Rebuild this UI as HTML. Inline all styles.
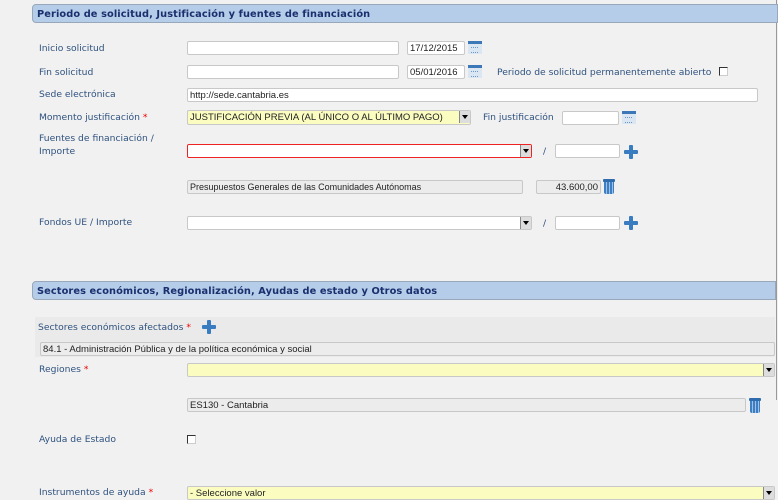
<!DOCTYPE html>
<html><head><meta charset="utf-8"><style>
body{margin:0;width:778px;height:500px;background:#f1f1f1;font-family:"DejaVu Sans","Liberation Sans",sans-serif;position:relative;overflow:hidden}
.a{position:absolute}
.h{position:absolute;left:32px;height:19px;background:#b5cde8;border:1px solid #98a8ba;border-radius:4px 0 0 4px;color:#1a2f6e;font-weight:bold;font-size:9.8px;line-height:19px;padding-left:4px;box-sizing:border-box;letter-spacing:0.1px}
.l{position:absolute;left:39px;font-size:9.2px;color:#2f527f;line-height:13px}
.i{position:absolute;height:14px;background:#fff;border:1px solid #c8c8c8;border-radius:2px;box-sizing:border-box;font-size:9.5px;color:#222;line-height:13px;padding-left:2px;font-family:"Liberation Sans",sans-serif}
.g{background:#ececec}
.y{background:#fbfdc0}
.s{color:#e00}
.arr{position:absolute;right:0;top:0;width:11px;height:12px;background:#ddd;border-left:1px solid #888;box-sizing:border-box}
.arr:after{content:"";position:absolute;left:2px;top:4px;border:3px solid transparent;border-top:4px solid #000}
.cal{position:absolute;width:14px;height:13px;background:#dbe6f3;border-top:3px solid #3c77b8;box-sizing:border-box}
.cal:after{content:"";position:absolute;left:3px;top:3px;width:7px;height:4px;border-top:1px dotted #6a96c8;border-bottom:1px dotted #6a96c8}
.plus{position:absolute;width:14px;height:14px}
.plus:before{content:"";position:absolute;left:5px;top:0;width:4px;height:14px;background:#3a7cc0;border-radius:1px}
.plus:after{content:"";position:absolute;left:0;top:5px;width:14px;height:4px;background:#3a7cc0;border-radius:1px}
.tr{position:absolute;width:12px;height:15px}
.tr:before{content:"";position:absolute;left:0;top:0;width:12px;height:3px;background:#2e6cae;border-radius:1px}
.tr:after{content:"";position:absolute;left:1px;top:3px;width:10px;height:12px;background:repeating-linear-gradient(90deg,#3d7fc2 0 2px,#9cc0e6 2px 3px);border-radius:0 0 2px 2px}
.cb{position:absolute;width:9px;height:9px;border:1px solid #333;background:#fff;box-sizing:border-box;border-right-color:#ccc;border-bottom-color:#ccc}
</style></head><body>
<div class="a" style="left:776px;top:0;width:1px;height:400px;background:#999"></div>
<div class="h" style="top:4px;width:746px">Periodo de solicitud, Justificación y fuentes de financiación</div>
<div class="l" style="top:42px">Inicio solicitud</div>
<div class="i" style="left:187px;top:41px;width:212px"></div>
<div class="i" style="left:407px;top:41px;width:58px">17/12/2015</div>
<div class="cal" style="left:468px;top:41px"></div>
<div class="l" style="top:66px">Fin solicitud</div>
<div class="i" style="left:187px;top:65px;width:212px"></div>
<div class="i" style="left:407px;top:65px;width:58px">05/01/2016</div>
<div class="cal" style="left:468px;top:65px"></div>
<div class="l" style="left:497px;top:66px">Periodo de solicitud permanentemente abierto</div>
<div class="cb" style="left:719px;top:67px"></div>
<div class="l" style="top:88px">Sede electrónica</div>
<div class="i" style="left:187px;top:88px;width:571px">http://sede.cantabria.es</div>
<div class="l" style="top:111px">Momento justificación <span class="s">*</span></div>
<div class="i y" style="left:187px;top:110px;width:284px;height:15px">JUSTIFICACIÓN PREVIA (AL ÚNICO O AL ÚLTIMO PAGO)<span class="arr"></span></div>
<div class="l" style="left:483px;top:111px">Fin justificación</div>
<div class="i" style="left:562px;top:111px;width:57px"></div>
<div class="cal" style="left:622px;top:111px"></div>
<div class="l" style="top:132px">Fuentes de financiación /<br>Importe</div>
<div class="i" style="left:187px;top:144px;width:345px;border-color:#e22"><span class="arr"></span></div>
<div class="l" style="left:543px;top:145px">/</div>
<div class="i" style="left:555px;top:144px;width:65px"></div>
<div class="plus" style="left:624px;top:145px"></div>
<div class="i g" style="left:187px;top:180px;width:336px;font-size:9px">Presupuestos Generales de las Comunidades Autónomas</div>
<div class="i g" style="left:536px;top:180px;width:65px;text-align:right;padding-right:2px">43.600,00</div>
<div class="tr" style="left:603px;top:179px"></div>
<div class="l" style="top:216px">Fondos UE / Importe</div>
<div class="i" style="left:187px;top:216px;width:345px"><span class="arr"></span></div>
<div class="l" style="left:543px;top:217px">/</div>
<div class="i" style="left:555px;top:216px;width:65px"></div>
<div class="plus" style="left:624px;top:216px"></div>
<div class="h" style="top:281px;width:744px">Sectores económicos, Regionalización, Ayudas de estado y Otros datos</div>
<div class="a" style="left:35px;top:317px;width:740px;height:40px;background:#eaeaea"></div>
<div class="l" style="left:38px;top:321px">Sectores económicos afectados <span class="s">*</span></div>
<div class="plus" style="left:202px;top:320px"></div>
<div class="i g" style="left:40px;top:342px;width:735px">84.1 - Administración Pública y de la política económica y social</div>
<div class="l" style="top:363px">Regiones <span class="s">*</span></div>
<div class="i y" style="left:187px;top:363px;width:588px"><span class="arr"></span></div>
<div class="i g" style="left:187px;top:398px;width:559px">ES130 - Cantabria</div>
<div class="tr" style="left:749px;top:398px"></div>
<div class="l" style="top:433px">Ayuda de Estado</div>
<div class="cb" style="left:187px;top:435px"></div>
<div class="l" style="top:486px">Instrumentos de ayuda <span class="s">*</span></div>
<div class="i y" style="left:187px;top:486px;width:588px">- Seleccione valor<span class="arr"></span></div>
</body></html>
